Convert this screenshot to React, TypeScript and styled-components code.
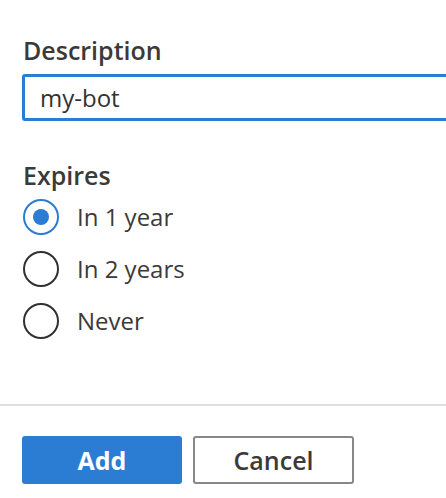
import React, { useState } from "react";
import styled, { createGlobalStyle } from "styled-components";

const GlobalStyle = createGlobalStyle`
  html, body {
    margin: 0;
    padding: 0;
    background: #ffffff;
    overflow: hidden;
  }
  body {
    font-family: "Open Sans", "Noto Sans", sans-serif;
    color: #323130;
  }
`;

const options = [
  { id: "1y", label: "In 1 year" },
  { id: "2y", label: "In 2 years" },
  { id: "never", label: "Never" },
];

const App = () => {
  const [expires, setExpires] = useState("1y");

  return (
    <>
      <GlobalStyle />
      <Panel>
        <Body>
          <Field>
            <Label>Description</Label>
            <TextInput defaultValue="my-bot" />
          </Field>
          <Field>
            <Label>Expires</Label>
            <RadioGroup>
              {options.map((o) => (
                <RadioRow key={o.id} onClick={() => setExpires(o.id)}>
                  <RadioCircle $checked={expires === o.id} />
                  <RadioText>{o.label}</RadioText>
                </RadioRow>
              ))}
            </RadioGroup>
          </Field>
        </Body>
        <Divider />
        <Footer>
          <PrimaryButton>Add</PrimaryButton>
          <DefaultButton>Cancel</DefaultButton>
        </Footer>
      </Panel>
    </>
  );
};

export default App;

const Panel = styled.div`
  width: 446px;
  height: 498px;
  display: flex;
  flex-direction: column;
`;

const Body = styled.div`
  box-sizing: border-box;
  display: flex;
  flex-direction: column;
  gap: 38px;
  padding: 34px 0 0 22px;
  height: 404px;
`;

const Field = styled.div`
  display: flex;
  flex-direction: column;
  gap: 8px;
`;

const Label = styled.div`
  font-size: 25px;
  font-weight: 600;
  line-height: 32px;
  color: #3b3a39;
  padding-left: 1px;
`;

const TextInput = styled.input`
  box-sizing: border-box;
  width: 460px;
  height: 47px;
  border: 3px solid #2b7cd3;
  border-radius: 3px;
  padding: 0 0 0 15px;
  font-family: inherit;
  font-size: 24px;
  color: #323130;
  outline: none;
`;

const RadioGroup = styled.div`
  display: flex;
  flex-direction: column;
  gap: 16px;
`;

const RadioRow = styled.label`
  display: flex;
  align-items: center;
  gap: 18px;
  height: 36px;
  padding-left: 1px;
  cursor: pointer;
`;

const RadioCircle = styled.span<{ $checked: boolean }>`
  box-sizing: border-box;
  width: 36px;
  height: 36px;
  border-radius: 50%;
  border: 2px solid ${(p) => (p.$checked ? "#2b7cd3" : "#323130")};
  display: flex;
  align-items: center;
  justify-content: center;
  flex-shrink: 0;

  &::after {
    content: "";
    width: 16px;
    height: 16px;
    border-radius: 50%;
    background: ${(p) => (p.$checked ? "#2b7cd3" : "transparent")};
  }
`;

const RadioText = styled.span`
  font-size: 24px;
  line-height: 32px;
  color: #3b3a39;
`;

const Divider = styled.div`
  height: 2px;
  background: #e1dfdd;
`;

const Footer = styled.div`
  display: flex;
  gap: 11px;
  padding: 30px 0 0 22px;
`;

const PrimaryButton = styled.button`
  box-sizing: border-box;
  width: 160px;
  height: 48px;
  border: none;
  border-radius: 3px;
  background: #2b7cd3;
  color: #ffffff;
  font-family: inherit;
  font-size: 25px;
  font-weight: 700;
`;

const DefaultButton = styled.button`
  box-sizing: border-box;
  width: 161px;
  height: 48px;
  border: 2px solid #8a8886;
  border-radius: 3px;
  background: #ffffff;
  color: #3b3a39;
  font-family: inherit;
  font-size: 25px;
  font-weight: 600;
`;
